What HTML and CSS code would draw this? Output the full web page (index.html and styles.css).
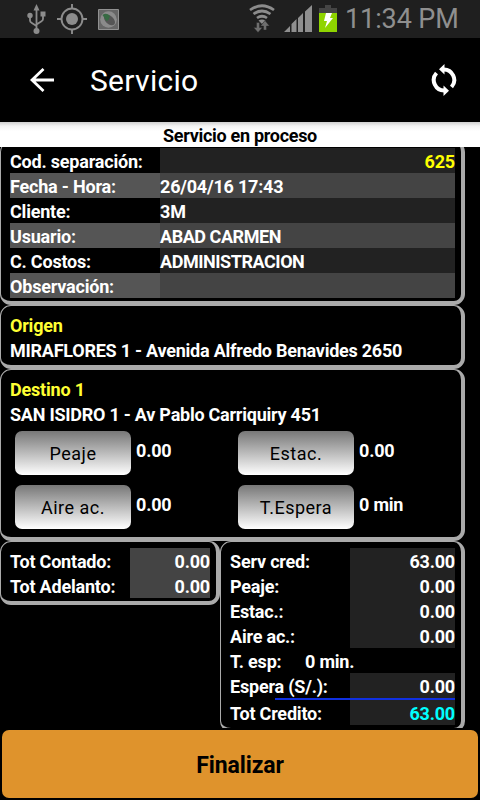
FILE: index.html
```html
<!DOCTYPE html>
<html lang="es">
<head>
    <meta charset="utf-8">
    <title>Servicio</title>
    <link rel="stylesheet" href="styles.css">
</head>
<body>
    <div class="status-bar">
        <div class="status-left">
            <svg width="20" height="30" viewBox="0 0 20 30" fill="none" stroke="#8c8c8c" stroke-width="1.8">
                <path d="M9.500 4v22M3 11v5.500q0 1.500 1.500 2.200l5 3.300M16 10v5q0 1.500-1.500 2.200l-5 3.300"/>
                <path d="M9.500 0l3 6.500h-6z" fill="#8c8c8c" stroke="none"/>
                <circle cx="3" cy="11.500" r="2.700" fill="#8c8c8c" stroke="none"/>
                <circle cx="9.500" cy="27" r="3" fill="#8c8c8c" stroke="none"/>
                <path d="M13.500 7.500h5v5h-5z" fill="#8c8c8c" stroke="none"/>
            </svg>
            <svg class="gps" width="30" height="30" viewBox="0 0 30 30" fill="none" stroke="#8c8c8c" stroke-width="1.900">
                <circle cx="15" cy="15" r="10.500"/>
                <circle cx="15" cy="15" r="6" fill="#8c8c8c" stroke="none"/>
                <path d="M15 0v5M15 25v5M0 15h5M25 15h5"/>
            </svg>
            <svg class="app" width="21" height="21" viewBox="0 0 21 21">
                <path d="M.5.5h20v20H.5z" fill="#666" stroke="#919191"/>
                <circle cx="10.500" cy="10.500" r="8.300" fill="#8b8b8b"/>
                <ellipse cx="11.500" cy="11" rx="6.500" ry="4" transform="rotate(42 11.500 11)" fill="#555"/>
                <path d="M4.500 6q4-3 7.500 1l-1.500 4-2 1z" fill="#376a43"/>
            </svg>
        </div>
        <div class="status-right">
            <svg width="26" height="29" viewBox="0 0 26 29" fill="none" stroke="#8c8c8c" stroke-width="2.700">
                <path d="M1 6q12-8.500 24 0M4.500 10q8.500-6 17 0M8 14q5-3.500 10 0"/>
                <path d="M9.500 16.500q3.500-2 7 0L13 20z" fill="#8c8c8c" stroke="none"/>
                <path d="M7.500 18.500h3v5h3l-4.500 5-4.500-5h3zM14.500 26v-4h-3l4.500-5.500 4.500 5.500h-3v4z" fill="#6e6e6e" stroke="#1f1f1f" stroke-width=".4"/>
            </svg>
            <svg class="signal" width="28" height="27" viewBox="0 0 28 27" fill="#8f8f8f">
                <path d="M0 27l6-6v6zM7.500 27v-8l5-5v13zM14 27V13l5-5v19zM21 27V6.500L28 0v27z"/>
            </svg>
            <svg class="battery" width="18" height="27" viewBox="0 0 18 27">
                <path d="M6 0h6v3h6v6H0V3h6z" fill="#454545"/>
                <path d="M0 8h18v19H0z" fill="#8fd400"/>
                <path d="M7 8h6l-2 5h3l-8 10 2-7H5z" fill="#fff"/>
            </svg>
            <span class="clock">11:34 PM</span>
        </div>
    </div>

    <header>
        <svg class="back" width="24" height="24" viewBox="0 0 24 24" fill="none" stroke="#fff" stroke-width="2.800">
            <path d="M13.500 1L2 12l11.500 11M2 12h22"/>
        </svg>
        <h1>Servicio</h1>
        <svg class="sync" width="28" height="32" viewBox="0 0 28 32" fill="none" stroke="#fff" stroke-width="4">
            <path d="M13 5.500a10.500 10.500 0 0 1 8.500 17.500M15 26.500A10.500 10.500 0 0 1 6.500 9"/>
            <path d="M9 5.200L14.500 0v10.500zM19 26.800L13.500 32V21.500z" fill="#fff" stroke="none"/>
        </svg>
    </header>

    <div class="state">Servicio en proceso</div>

    <main>
        <section class="card details">
            <div class="row"><span class="label">Cod. separación:</span><span class="value code">625</span></div>
            <div class="row"><span class="label">Fecha - Hora:</span><span class="value">26/04/16 17:43</span></div>
            <div class="row"><span class="label">Cliente:</span><span class="value">3M</span></div>
            <div class="row"><span class="label">Usuario:</span><span class="value caps">ABAD CARMEN</span></div>
            <div class="row"><span class="label">C. Costos:</span><span class="value caps">ADMINISTRACION</span></div>
            <div class="row"><span class="label">Observación:</span><span class="value"></span></div>
        </section>

        <section class="card">
            <h2>Origen</h2>
            <p>MIRAFLORES 1 - Avenida Alfredo Benavides 2650</p>
        </section>

        <section class="card">
            <h2>Destino 1</h2>
            <p>SAN ISIDRO 1 - Av Pablo Carriquiry 451</p>
            <div class="extras">
                <div class="extra"><button>Peaje</button><span>0.00</span></div>
                <div class="extra"><button>Estac.</button><span>0.00</span></div>
                <div class="extra"><button>Aire ac.</button><span>0.00</span></div>
                <div class="extra"><button>T.Espera</button><span>0 min</span></div>
            </div>
        </section>

        <div class="totals">
            <section class="card cash">
                <div class="row"><span class="label">Tot Contado:</span><span class="value">0.00</span></div>
                <div class="row"><span class="label">Tot Adelanto:</span><span class="value">0.00</span></div>
            </section>
            <section class="card credit">
                <div class="row"><span class="label">Serv cred:</span><span class="value">63.00</span></div>
                <div class="row"><span class="label">Peaje:</span><span class="value">0.00</span></div>
                <div class="row"><span class="label">Estac.:</span><span class="value">0.00</span></div>
                <div class="row"><span class="label">Aire ac.:</span><span class="value">0.00</span></div>
                <div class="row"><span class="wait">T. esp:</span><span>0 min.</span></div>
                <div class="row"><span class="label">Espera (S/.):</span><span class="value">0.00</span></div>
                <div class="line"></div>
                <div class="row"><span class="label">Tot Credito:</span><span class="value total">63.00</span></div>
            </section>
        </div>
    </main>

    <footer>
        <button class="finish">Finalizar</button>
    </footer>
</body>
</html>
```

FILE: styles.css
```css
* {
    box-sizing: border-box;
}

body {
    margin: 0;
    width: 480px;
    height: 800px;
    display: flex;
    flex-direction: column;
    overflow: hidden;
    background-color: #000;
    color: #fff;
    font-family: Roboto, "Liberation Sans", sans-serif;
    font-size: 18px;
    font-weight: 700;
    line-height: 27px;
    letter-spacing: -0.2px;
}

h1, h2, p {
    margin: 0;
}

svg {
    display: block;
    flex: none;
}

.status-bar {
    flex: none;
    height: 38px;
    display: flex;
    justify-content: space-between;
    background-color: #1f1f1f;
}

.status-left,
.status-right {
    display: flex;
    align-items: flex-start;
    padding-top: 4px;
}

.status-left {
    padding-left: 27px;
}

.gps {
    margin-left: 10px;
}

.app {
    margin: 5px 0 0 11px;
}

.status-right {
    padding-right: 21px;
}

.signal {
    margin: 1px 0 0 9px;
}

.battery {
    margin: 1px 0 0 7px;
}

.clock {
    width: 114px;
    margin-left: 8px;
    line-height: 31px;
    font-size: 27px;
    font-weight: 400;
    white-space: nowrap;
    color: #8f8f8f;
    letter-spacing: -0.1px;
}

header {
    flex: none;
    height: 84px;
    display: flex;
    align-items: center;
    padding: 0 22px 0 30px;
}

h1 {
    flex: 1;
    margin-left: 36px;
    font-size: 30px;
    font-weight: 400;
    line-height: 36px;
    padding-top: 2px;
    letter-spacing: 0.3px;
}

.state {
    flex: none;
    height: 25px;
    line-height: 28px;
    text-align: center;
    color: #000;
    letter-spacing: -0.3px;
    background: linear-gradient(#cfcfcf, #f2f2f2 4px, #fff 9px);
}

main {
    flex: none;
    height: 581px;
    overflow: hidden;
    display: flex;
    flex-direction: column;
}

.card {
    flex: none;
    width: 465px;
    padding: 6px 6px 3px 9px;
    border: solid #aaa;
    border-width: 1px 4px 4px 1px;
    border-radius: 11px;
    white-space: nowrap;
}

.row {
    display: flex;
    height: 25px;
}

.label {
    flex: none;
    width: 120px;
}

.value {
    flex: 1;
    text-align: right;
    background-color: #222;
}

.details {
    margin-top: -6px;
}

.details .label {
    width: 150px;
}

.details .value {
    text-align: left;
}

.details .row:nth-child(even) .label {
    background-color: #555;
}

.details .row:nth-child(even) .value {
    background-color: #444;
}

.details .code {
    text-align: right;
    color: #ff0;
}

.caps {
    letter-spacing: -0.45px;
}

h2,
.card p {
    height: 25px;
    font-size: 18px;
}

h2 {
    color: #ffff33;
}

.card p {
    letter-spacing: -0.24px;
}

.extras {
    display: grid;
    grid-template-columns: 223px 222px;
}

.extra {
    display: flex;
    height: 54px;
    padding: 5px;
}

.extra span {
    margin: 6px 0 0 5px;
}

.extra button {
    width: 116px;
    height: 44px;
    padding: 0;
    border: none;
    border-radius: 7px;
    background: linear-gradient(#777, #fff);
    font-family: inherit;
    font-size: 18px;
    color: #000;
    letter-spacing: 0.5px;
}

.totals {
    display: flex;
    align-items: flex-start;
}

.cash {
    width: 220px;
}

.cash .value {
    background-color: #444;
}

.credit {
    width: 245px;
}

.wait {
    width: 75px;
}

.line {
    position: relative;
    width: 180px;
    height: 2px;
    margin-left: auto;
    background-color: #1030e0;
}

.total {
    color: #0ff;
}

footer {
    flex: 1;
    padding: 2px;
}

.finish {
    display: block;
    width: 476px;
    height: 68px;
    padding: 2px 0 0;
    border: none;
    border-radius: 7px;
    background-color: #df932c;
    font-family: inherit;
    font-size: 23px;
    font-weight: 700;
    color: #000;
    letter-spacing: -0.1px;
}
```
